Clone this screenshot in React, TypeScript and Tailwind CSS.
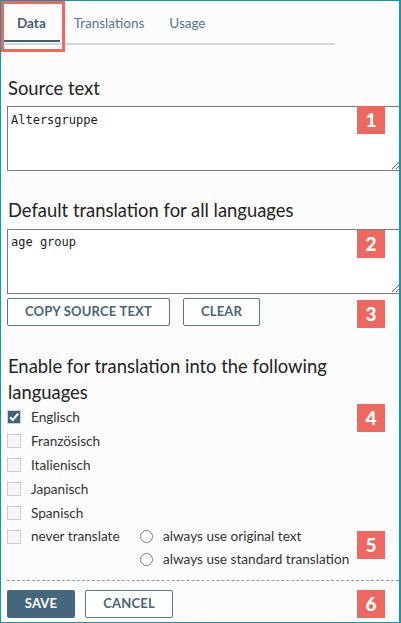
import React from "react";

function Badge({ n, top }: { n: string; top: string }) {
  return (
    <div
      className={`absolute left-[356px] ${top} w-[28px] h-[28px] bg-[#ec6861] text-white flex items-center justify-center text-[19px] font-black font-['Lato',sans-serif]`}
    >
      {n}
    </div>
  );
}

function Check({ checked = false }: { checked?: boolean }) {
  if (checked) {
    return (
      <div className="w-[14px] h-[14px] border border-[#c9d3dc] bg-[#3f6478] flex items-center justify-center">
        <svg width="12" height="12" viewBox="0 0 12 12">
          <path d="M2 6.2 L4.8 9 L10.2 2.6" stroke="white" strokeWidth="2.2" fill="none" />
        </svg>
      </div>
    );
  }
  return <div className="w-[14px] h-[14px] border border-[#cdcdcd] bg-[#f6f6f6]" />;
}

function Radio() {
  return <div className="w-[13px] h-[13px] rounded-full border border-[#7d7d7d] bg-white" />;
}

export default function App() {
  const langs = ["Französisch", "Italienisch", "Japanisch", "Spanisch"];
  return (
    <div className="relative w-[401px] h-[623px] overflow-hidden border-t border-b border-l border-r-2 border-[#1398a6] bg-[#fcfcfc] font-['Lato',sans-serif] text-[#222]">
      {/* tabs */}
      <div className="ml-[2px] w-[332px] flex pb-[1px] border-b-2 border-[#cfd7e0] text-[13.5px]">
        <div className="h-[41px] px-[14px] pt-[5px] flex items-center border-b-2 border-[#3e6275] font-bold text-[#3e5f72]">
          Data
        </div>
        <div className="h-[41px] px-[14px] pt-[5px] flex items-center border-b-2 border-transparent text-[#56768a]">
          Translations
        </div>
        <div className="h-[41px] px-[11px] pt-[5px] flex items-center border-b-2 border-transparent text-[#56768a]">
          Usage
        </div>
      </div>

      <div className="mt-[31px] px-[7px] text-[18.4px] leading-[24px] text-[#222]">Source text</div>
      <textarea
        className="block mt-[6px] ml-[6px] w-[394px] h-[65px] border border-[#7a7a7a] bg-white px-[3px] pt-[6px] font-['DejaVu_Sans_Mono',monospace] text-[12px] leading-[15px] text-[#222] outline-none"
        defaultValue="Altersgruppe"
      />

      <div className="mt-[27px] px-[7px] text-[18.4px] leading-[24px] text-[#222]">
        Default translation for all languages
      </div>
      <textarea
        className="block mt-[7px] ml-[6px] w-[394px] h-[65px] border border-[#7a7a7a] bg-white px-[3px] pt-[5px] font-['DejaVu_Sans_Mono',monospace] text-[12px] leading-[15px] text-[#222] outline-none"
        defaultValue="age group"
      />

      <div className="mt-[4px] ml-[6px] flex gap-[13px]">
        <button className="w-[163px] h-[28px] border border-[#56768a] rounded-[2px] bg-white text-[13px] font-bold text-[#46667a] tracking-[0.2px]">
          COPY SOURCE TEXT
        </button>
        <button className="w-[77px] h-[28px] border border-[#56768a] rounded-[2px] bg-white text-[13px] font-bold text-[#46667a] tracking-[0.2px]">
          CLEAR
        </button>
      </div>

      <div className="mt-[27px] px-[7px] text-[18.4px] leading-[26px] text-[#222]">
        Enable for translation into the following languages
      </div>

      <div className="pl-[6px] text-[13.6px] text-[#333]">
        <div className="h-[24px] flex items-center gap-[10px]">
          <Check checked />
          <span>Englisch</span>
        </div>
        {langs.map((l) => (
          <div key={l} className="h-[24px] flex items-center gap-[10px]">
            <Check />
            <span>{l}</span>
          </div>
        ))}
        <div className="flex">
          <div className="w-[133px] h-[23px] flex items-center gap-[10px]">
            <Check />
            <span>never translate</span>
          </div>
          <div className="flex flex-col">
            <div className="h-[23px] flex items-center gap-[10px]">
              <Radio />
              <span>always use original text</span>
            </div>
            <div className="h-[23px] flex items-center gap-[10px]">
              <Radio />
              <span>always use standard translation</span>
            </div>
          </div>
        </div>
      </div>

      <div className="mt-[9px] ml-[6px] border-t border-dashed border-[#9a9a9a]" />

      <div className="mt-[9px] ml-[6px] flex gap-[10px]">
        <button className="w-[68px] h-[28px] rounded-[2px] bg-[#46677b] text-[13px] font-bold text-white tracking-[0.2px]">
          SAVE
        </button>
        <button className="w-[88px] h-[28px] border border-[#56768a] rounded-[2px] bg-white text-[13px] font-bold text-[#46667a] tracking-[0.2px]">
          CANCEL
        </button>
      </div>

      {/* annotation overlays */}
      <div className="absolute left-0 top-0 w-[64px] h-[51px] border-[3px] border-[#ec6861]" />
      <Badge n="1" top="top-[105px]" />
      <Badge n="2" top="top-[229px]" />
      <Badge n="3" top="top-[299px]" />
      <Badge n="4" top="top-[403px]" />
      <Badge n="5" top="top-[530px]" />
      <Badge n="6" top="top-[589px]" />
    </div>
  );
}
